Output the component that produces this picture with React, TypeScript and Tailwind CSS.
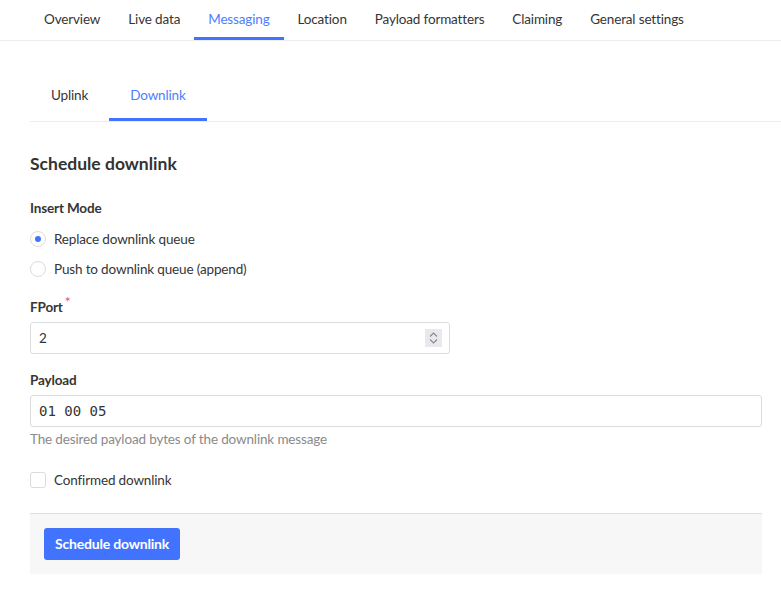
import React from "react";

const tabs = [
  "Overview",
  "Live data",
  "Messaging",
  "Location",
  "Payload formatters",
  "Claiming",
  "General settings",
];

function Radio({ checked, label }: { checked?: boolean; label: string }) {
  return (
    <label className="flex h-[30px] items-center gap-2">
      <span className="flex size-4 items-center justify-center rounded-full border border-[#dcdcdc] bg-white">
        {checked && <span className="size-[6px] rounded-full bg-[#4173ff]" />}
      </span>
      <span>{label}</span>
    </label>
  );
}

export default function App() {
  return (
    <div
      className="min-h-[590px] bg-white text-[13.5px] leading-5 tracking-[-0.15px] text-[#353535]"
      style={{ fontFamily: "Lato, 'Noto Sans', sans-serif" }}
    >
      <nav className="flex border-b border-[#ececec] pl-[30px]">
        {tabs.map((t) => {
          const active = t === "Messaging";
          return (
            <div
              key={t}
              className={`flex h-[40px] items-center border-b-[3px] px-[14px] ${
                active ? "border-[#4173ff] text-[#4d7dff]" : "border-transparent"
              }`}
            >
              {t}
            </div>
          );
        })}
      </nav>

      <div className="pl-[30px]">
        <div className="mt-[29px] flex border-b border-[#ececec]">
          {["Uplink", "Downlink"].map((t) => {
            const active = t === "Downlink";
            return (
              <div
                key={t}
                className={`flex h-[51px] items-center border-b-[3px] px-[21px] pt-[2px] ${
                  active ? "border-[#4173ff] text-[#4d7dff]" : "border-transparent"
                }`}
              >
                {t}
              </div>
            );
          })}
        </div>

        <div className="pr-[19px]">
          <h2 className="mt-[30px] text-[17.5px] font-bold leading-6 tracking-normal text-[#333]">
            Schedule downlink
          </h2>

          <div className="mt-[22px] font-bold">Insert Mode</div>
          <div className="mt-[6px]">
            <Radio checked label="Replace downlink queue" />
            <Radio label="Push to downlink queue (append)" />
          </div>

          <div className="mt-[13px] font-bold">
            FPort
            <span className="relative -top-[5px] ml-[2px] text-[14px] font-normal text-[#f0506e]">
              *
            </span>
          </div>
          <div className="relative mt-[5px] w-[420px]">
            <div className="flex h-[32px] items-center rounded-[3px] border border-[#dcdcdc] px-2">
              2
            </div>
            <div className="absolute right-[8px] top-[7px] flex h-[18px] w-[17px] items-center justify-center bg-[#e9e9ed]">
              <svg width="11" height="14" viewBox="0 0 11 14" fill="none" stroke="#8a8a92" strokeWidth="1.2">
                <path d="M2 5.5 L5.5 2 L9 5.5" />
                <path d="M2 8.5 L5.5 12 L9 8.5" />
              </svg>
            </div>
          </div>

          <div className="mt-[16px] font-bold">Payload</div>
          <div
            className="mt-[5px] flex h-[32px] items-center rounded-[3px] border border-[#dcdcdc] px-2 text-[14px] tracking-normal"
            style={{ fontFamily: "'DejaVu Sans Mono', monospace" }}
          >
            01 00 05
          </div>
          <div className="mt-[2px] text-[#8a8a8a]">
            The desired payload bytes of the downlink message
          </div>

          <label className="mt-[21px] flex h-5 items-center gap-2">
            <span className="size-4 rounded-[3px] border border-[#dcdcdc] bg-white" />
            <span>Confirmed downlink</span>
          </label>

          <div className="mt-[23px] border-t border-[#dedede] bg-[#f7f7f7] pb-[14px] pl-[14px] pt-[14px]">
            <button
              type="button"
              className="h-[32px] w-[136px] rounded-[3px] bg-[#4173ff] text-[14px] font-bold tracking-[-0.2px] text-white"
            >
              Schedule downlink
            </button>
          </div>
        </div>
      </div>
    </div>
  );
}
